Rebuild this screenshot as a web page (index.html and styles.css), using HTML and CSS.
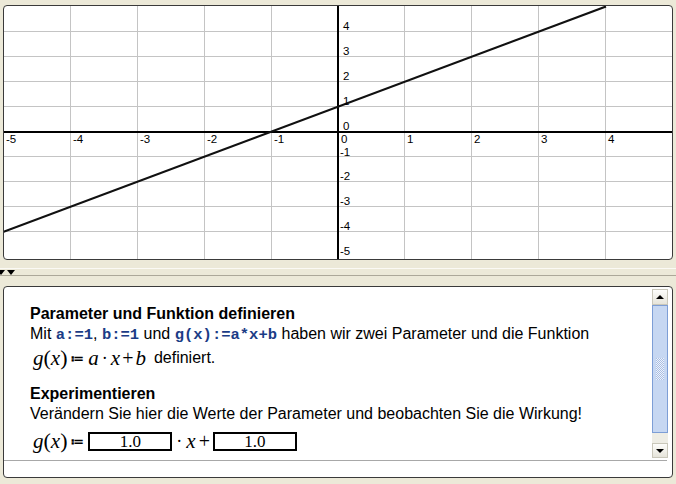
FILE: index.html
```html
<!DOCTYPE html>
<html>
<head>
<meta charset="utf-8">
<link rel="stylesheet" href="styles.css">
</head>
<body>
<div class="app">
  <div class="graph">
    <svg class="plot" width="668" height="253" viewBox="0 0 668 253" xmlns="http://www.w3.org/2000/svg">
      <g stroke="#c4c4c4" stroke-width="1">
        <line x1="66.5" y1="0" x2="66.5" y2="253"/>
        <line x1="133.5" y1="0" x2="133.5" y2="253"/>
        <line x1="200.5" y1="0" x2="200.5" y2="253"/>
        <line x1="267.5" y1="0" x2="267.5" y2="253"/>
        <line x1="400.5" y1="0" x2="400.5" y2="253"/>
        <line x1="467.5" y1="0" x2="467.5" y2="253"/>
        <line x1="534.5" y1="0" x2="534.5" y2="253"/>
        <line x1="601.5" y1="0" x2="601.5" y2="253"/>
        <line x1="0" y1="25.5" x2="668" y2="25.5"/>
        <line x1="0" y1="50.5" x2="668" y2="50.5"/>
        <line x1="0" y1="75.5" x2="668" y2="75.5"/>
        <line x1="0" y1="100.5" x2="668" y2="100.5"/>
        <line x1="0" y1="150.5" x2="668" y2="150.5"/>
        <line x1="0" y1="175.5" x2="668" y2="175.5"/>
        <line x1="0" y1="200.5" x2="668" y2="200.5"/>
        <line x1="0" y1="225.5" x2="668" y2="225.5"/>
      </g>
      <g stroke="#000" stroke-width="2">
        <line x1="0" y1="126" x2="668" y2="126"/>
        <line x1="334" y1="0" x2="334" y2="253"/>
      </g>
      <line x1="-1" y1="226" x2="602" y2="0.5" stroke="#111" stroke-width="2.2"/>
      <g class="lbl">
        <text x="2" y="137">-5</text>
        <text x="69" y="137">-4</text>
        <text x="136" y="137">-3</text>
        <text x="203" y="137">-2</text>
        <text x="270" y="137">-1</text>
        <text x="337" y="137">0</text>
        <text x="403" y="137">1</text>
        <text x="470" y="137">2</text>
        <text x="537" y="137">3</text>
        <text x="604" y="137">4</text>
        <text x="339" y="23.5">4</text>
        <text x="339" y="48.5">3</text>
        <text x="339" y="73.5">2</text>
        <text x="339" y="98.5">1</text>
        <text x="339" y="123.5">0</text>
        <text x="336" y="149.5">-1</text>
        <text x="336" y="173.5">-2</text>
        <text x="336" y="198.5">-3</text>
        <text x="336" y="223.5">-4</text>
        <text x="336" y="248.5">-5</text>
      </g>
    </svg>
  </div>
  <div class="splitter">
    <div class="split-hi"></div>
    <div class="split-arrows"><span class="tri tri-cut"></span><span class="tri"></span></div>
    <div class="split-lo"></div>
  </div>
  <div class="panel">
    <div class="panel-row">
      <div class="content">
        <div class="h">Parameter und Funktion definieren</div>
        <div class="p">Mit <code>a:=1</code>, <code>b:=1</code> und <code>g(x):=a*x+b</code> haben wir zwei Parameter und die Funktion</div>
        <div class="math m1"><span class="mi">g</span><span class="mp">(</span><span class="mi">x</span><span class="mp">)</span><span class="def">≔</span><span class="mi">a</span><span class="dot">·</span><span class="mi">x</span><span class="plus">+</span><span class="mi">b</span><span class="txt">definiert.</span></div>
        <div class="h">Experimentieren</div>
        <div class="p">Verändern Sie hier die Werte der Parameter und beobachten Sie die Wirkung!</div>
        <div class="math m2"><span class="mi">g</span><span class="mp">(</span><span class="mi">x</span><span class="mp">)</span><span class="def">≔</span><span class="box">1.0</span><span class="dot">·</span><span class="mi">x</span><span class="plus">+</span><span class="box">1.0</span></div>
      </div>
      <div class="scrollbar">
        <div class="sb-btn"><span class="arr-up"></span></div>
        <div class="sb-thumb"><span class="grip"></span></div>
        <div class="sb-track"></div>
        <div class="sb-btn sb-down"><span class="arr-down"></span></div>
      </div>
    </div>
    <div class="sep"></div>
  </div>
</div>
</body>
</html>
```

FILE: styles.css
```css
html, body {
  margin: 0;
  padding: 0;
}
body {
  width: 676px;
  height: 484px;
  overflow: hidden;
  background: #ece9d8;
  font-family: "Liberation Sans", Arial, sans-serif;
}
.app {
  padding: 5px 3px 0 3px;
}
.graph {
  box-sizing: border-box;
  height: 255px;
  width: 670px;
  border: 1px solid #3a3a3a;
  border-radius: 4px;
  background: #fff;
  overflow: hidden;
}
.plot {
  display: block;
}
.lbl text {
  font-family: "Liberation Sans", Arial, sans-serif;
  font-size: 11.5px;
  fill: #000;
}
.splitter {
  box-sizing: border-box;
  height: 26px;
  margin: 0 -3px;
  padding-top: 8px;
}
.split-hi {
  height: 1px;
  background: #fbfaf5;
}
.split-arrows {
  display: flex;
  gap: 2px;
  height: 5px;
  padding-top: 1px;
}
.tri {
  width: 0;
  height: 0;
  border-left: 4px solid transparent;
  border-right: 4px solid transparent;
  border-top: 5px solid #000;
}
.tri-cut {
  margin-left: -3px;
}
.split-lo {
  height: 1px;
  background: #aca899;
}
.panel {
  box-sizing: border-box;
  width: 670px;
  height: 192px;
  border: 1px solid #3a3a3a;
  border-radius: 4px;
  background: #fff;
  overflow: hidden;
}
.panel-row {
  display: flex;
  height: 173px;
}
.content {
  flex: 1;
  padding: 17px 0 0 26px;
  font-size: 16px;
  color: #000;
}
.h {
  font-weight: bold;
  line-height: 20px;
}
.p {
  line-height: 20px;
}
code {
  font-family: "Liberation Mono", "Courier New", monospace;
  font-weight: bold;
  font-size: 15.5px;
  color: #1b3c86;
}
.math {
  display: flex;
  align-items: center;
  font-family: "Liberation Serif", "Times New Roman", serif;
  height: 26px;
  padding-left: 3px;
}
.m1 {
  margin-bottom: 13px;
}
.m2 {
  margin-top: 4px;
}
.mi {
  font-style: italic;
  font-size: 21px;
}
.mp {
  font-size: 22px;
}
.def {
  font-family: "DejaVu Sans", sans-serif;
  font-size: 13px;
  font-weight: bold;
  margin: 0 4px 0 3px;
}
.dot {
  font-size: 18px;
  margin: 0 3px;
}
.plus {
  font-size: 20px;
  margin: 0 2px;
}
.m2 .dot {
  margin: 0 4px 0 4px;
}
.m2 .plus {
  margin: 0 3px 0 3px;
}
.txt {
  font-family: "Liberation Sans", Arial, sans-serif;
  font-size: 16px;
  margin-left: 8px;
}
.box {
  box-sizing: border-box;
  display: inline-block;
  width: 84px;
  height: 19px;
  border: 2px solid #000;
  text-align: center;
  font-size: 17px;
  line-height: 15px;
}
.scrollbar {
  display: flex;
  flex-direction: column;
  width: 16px;
  height: 169px;
  margin: 2px 4px 0 0;
  background: #f4f3ee;
}
.sb-btn {
  box-sizing: border-box;
  height: 16px;
  border: 1px solid #c9c7ba;
  background: linear-gradient(#fdfdfb, #e6e4da);
  display: flex;
  align-items: center;
  justify-content: center;
}
.sb-down {
  height: 15px;
}
.arr-up {
  width: 0;
  height: 0;
  border-left: 4px solid transparent;
  border-right: 4px solid transparent;
  border-bottom: 4px solid #000;
}
.arr-down {
  width: 0;
  height: 0;
  border-left: 4px solid transparent;
  border-right: 4px solid transparent;
  border-top: 4px solid #000;
}
.sb-thumb {
  box-sizing: border-box;
  height: 128px;
  border: 1px solid #7d9ed6;
  background: #c6d7f2;
  display: flex;
  align-items: center;
  justify-content: center;
}
.grip {
  width: 8px;
  height: 22px;
  background: repeating-conic-gradient(#eef3fb 0 25%, #a9bee4 0 50%) 0 0 / 2px 2px;
}
.sb-track {
  height: 10px;
  background: #eeede5;
}
.sep {
  height: 1px;
  background: #a8a8a8;
  margin-right: 5px;
}
```
